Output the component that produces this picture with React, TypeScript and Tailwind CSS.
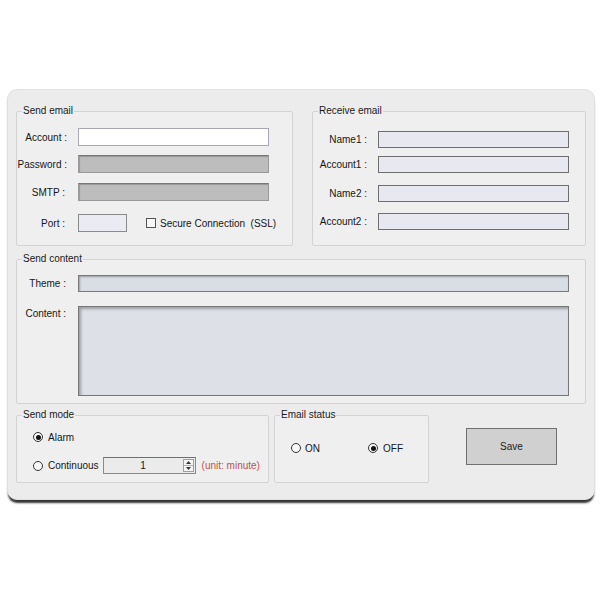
import React from 'react';

// Mail alarm settings panel — classic WinForms-style group boxes

function Group({ title, className, children }: { title: string; className: string; children?: React.ReactNode }) {
  return (
    <fieldset className={`border border-[#d3d3d3] rounded-[2px] bg-[#efefef] ${className}`}>
      <legend className="ml-[5px] px-[1px] leading-[14px] text-[#1a1a1a]">{title}</legend>
      {children}
    </fieldset>
  );
}

function Radio({ checked }: { checked?: boolean }) {
  return (
    <span className="flex h-[10px] w-[10px] shrink-0 items-center justify-center rounded-full border border-[#333] bg-[#f7f7f7]">
      {checked && <span className="h-[5px] w-[5px] rounded-full bg-[#111]" />}
    </span>
  );
}

export default function App() {
  return (
    <div className="h-[600px] w-[600px] bg-white pl-[7px] pt-[89px] font-['Liberation_Sans',Arial,sans-serif] text-[10px] text-[#161616]">
      <div className="h-[411px] w-[588px] rounded-[10px] border border-[#e0e0e0] bg-[#ececec] px-[8px] pt-[14px] shadow-[0_4px_2px_-1px_rgba(0,0,0,0.8)]">
        {/* row 1 */}
        <div className="flex gap-[19px]">
          <Group title="Send email" className="h-[142px] w-[277px]">
            <div className="mt-[10px] flex h-[18px] items-center">
              <span className="w-[50px] whitespace-nowrap text-right">Account :</span>
              <div className="ml-[11px] h-[18px] w-[191px] border border-[#a8a8ba] bg-white" />
            </div>
            <div className="mt-[9px] flex h-[18px] items-center">
              <span className="w-[50px] whitespace-nowrap text-right">Password :</span>
              <div className="ml-[11px] h-[18px] w-[191px] border border-[#999] border-t-[#777] bg-[#bdbdbd] shadow-[inset_1px_1px_1px_rgba(0,0,0,0.2)]" />
            </div>
            <div className="mt-[10px] flex h-[18px] items-center">
              <span className="w-[48px] whitespace-nowrap text-right">SMTP :</span>
              <div className="ml-[13px] h-[18px] w-[191px] border border-[#999] border-t-[#777] bg-[#bdbdbd] shadow-[inset_1px_1px_1px_rgba(0,0,0,0.2)]" />
            </div>
            <div className="mt-[13px] flex h-[18px] items-center">
              <span className="w-[48px] whitespace-nowrap text-right">Port :</span>
              <div className="ml-[13px] h-[18px] w-[49px] border border-[#8a8a8a] bg-[#ebebf3]" />
              <span className="ml-[19px] h-[10px] w-[10px] border border-[#555] bg-[#f7f7f7]" />
              <span className="ml-[4px] whitespace-pre">Secure Connection  (SSL)</span>
            </div>
          </Group>

          <Group title="Receive email" className="h-[142px] w-[274px]">
            <div className="mt-[13px] flex h-[17px] items-center">
              <span className="w-[54px] whitespace-nowrap text-right">Name1 :</span>
              <div className="ml-[11px] h-[17px] w-[191px] border border-[#6e6e6e] bg-[#e8e8f1]" />
            </div>
            <div className="mt-[8px] flex h-[17px] items-center">
              <span className="w-[54px] whitespace-nowrap text-right">Account1 :</span>
              <div className="ml-[11px] h-[17px] w-[191px] border border-[#6e6e6e] bg-[#e8e8f1]" />
            </div>
            <div className="mt-[12px] flex h-[17px] items-center">
              <span className="w-[54px] whitespace-nowrap text-right">Name2 :</span>
              <div className="ml-[11px] h-[17px] w-[191px] border border-[#6e6e6e] bg-[#e8e8f1]" />
            </div>
            <div className="mt-[11px] flex h-[17px] items-center">
              <span className="w-[54px] whitespace-nowrap text-right">Account2 :</span>
              <div className="ml-[11px] h-[17px] w-[191px] border border-[#6e6e6e] bg-[#e8e8f1]" />
            </div>
          </Group>
        </div>

        {/* row 2 */}
        <Group title="Send content" className="mt-[6px] h-[152px] w-[570px]">
          <div className="mt-[9px] flex h-[17px] items-center">
            <span className="w-[49px] whitespace-nowrap text-right">Theme :</span>
            <div className="ml-[12px] h-[17px] w-[491px] border border-[#7a7a7a] bg-[#d9dde4] shadow-[inset_1px_1px_2px_rgba(0,0,0,0.3)]" />
          </div>
          <div className="mt-[14px] flex items-start">
            <span className="mt-[2px] w-[49px] whitespace-nowrap text-right leading-[12px]">Content :</span>
            <div className="ml-[12px] h-[90px] w-[491px] border border-[#777] bg-[#dde0e6] shadow-[inset_2px_2px_3px_rgba(0,0,0,0.3)]" />
          </div>
        </Group>

        {/* row 3 */}
        <div className="mt-[4px] flex items-start">
          <Group title="Send mode" className="h-[75px] w-[253px]">
            <div className="ml-[16px] mt-[8px] flex h-[14px] items-center gap-[5px]">
              <Radio checked />
              <span>Alarm</span>
            </div>
            <div className="ml-[16px] mt-[13px] flex h-[17px] items-center">
              <Radio />
              <span className="ml-[5px]">Continuous</span>
              <div className="ml-[4px] flex h-[17px] w-[93px] border border-[#8a8a8a] border-t-[#6f6f6f] bg-[#ebebeb]">
                <span className="flex-1 text-center leading-[15px]">1</span>
                <div className="my-[1px] mr-[1px] flex w-[11px] flex-col border border-[#a0a0a0] bg-[#f4f4f4]">
                  <span className="flex flex-1 items-center justify-center border-b border-[#b0b0b0]">
                    <svg width="5" height="3" viewBox="0 0 5 3"><path d="M0 3 L2.5 0 L5 3 Z" fill="#333" /></svg>
                  </span>
                  <span className="flex flex-1 items-center justify-center">
                    <svg width="5" height="3" viewBox="0 0 5 3"><path d="M0 0 L2.5 3 L5 0 Z" fill="#333" /></svg>
                  </span>
                </div>
              </div>
              <span className="ml-[6px] whitespace-nowrap text-[#c2504f]">(unit: minute)</span>
            </div>
          </Group>

          <Group title="Email status" className="ml-[5px] h-[75px] w-[155px]">
            <div className="ml-[16px] mt-[19px] flex h-[14px] items-center">
              <div className="flex w-[77px] items-center gap-[4px]">
                <Radio />
                <span>ON</span>
              </div>
              <div className="flex items-center gap-[5px]">
                <Radio checked />
                <span>OFF</span>
              </div>
            </div>
          </Group>

          <button
            type="button"
            className="ml-[37px] mt-[20px] h-[37px] w-[91px] border border-[#707070] bg-[#d0d0d0] text-[10px] text-[#222]"
          >
            Save
          </button>
        </div>
      </div>
    </div>
  );
}
